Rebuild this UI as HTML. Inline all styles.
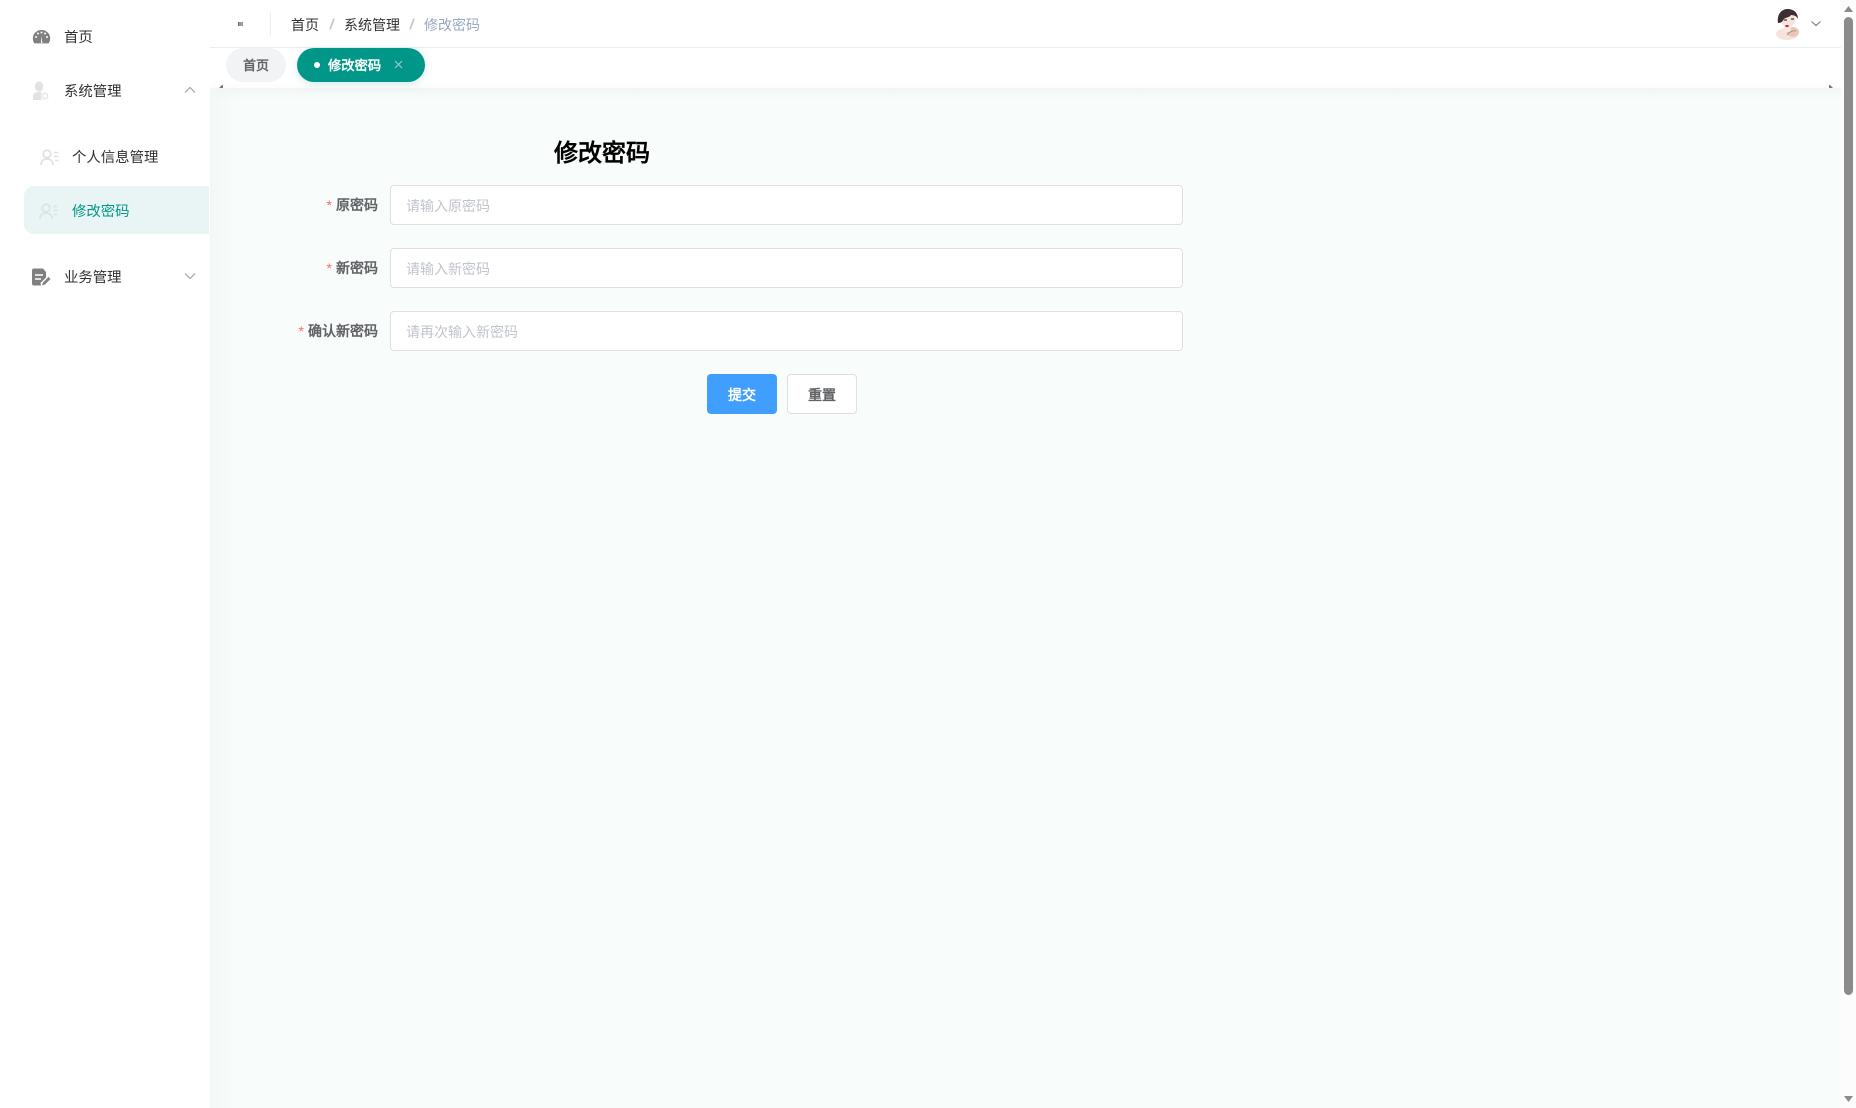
<!DOCTYPE html>
<html lang="zh"><head><meta charset="utf-8"><title>修改密码</title>
<style>
html,body{margin:0;padding:0;width:1856px;height:1108px;overflow:hidden;background:#f8fcfb;font-family:"Liberation Sans","WenQuanYi Zen Hei",sans-serif;font-size:14px;color:#303133}
.a{position:absolute;white-space:nowrap;line-height:20px}
#bg{position:absolute;left:210px;top:88px;width:1631px;height:1020px;background:linear-gradient(90deg,#f3f8f7 0,#f8fcfb 26px)}
#bg2{position:absolute;left:210px;top:88px;width:1631px;height:12px;background:linear-gradient(180deg,#f1f6f5,rgba(248,252,251,0))}
#side{position:absolute;left:0;top:0;width:210px;height:1108px;background:#fff}
#head{position:absolute;left:210px;top:0;width:1631px;height:47px;background:#fff;border-bottom:1px solid #ebedef}
#tabs{position:absolute;left:210px;top:48px;width:1631px;height:40px;background:linear-gradient(180deg,#fff 0,#fff 85%,#fbfcfc 100%)}
.pill{position:absolute;top:48px;height:34px;border-radius:17px}
.lab{position:absolute;right:1478px;font-weight:700;color:#606266;line-height:20px;white-space:nowrap}
.lab i{color:#f56c6c;font-style:normal;margin-right:4px;font-weight:400}
.inp{position:absolute;left:390px;width:791px;height:38px;background:#fff;border:1px solid #dcdfe6;border-radius:4px}
.inp span{position:absolute;left:15px;top:10px;color:#c0c4cc;line-height:20px;white-space:nowrap}
.btn{position:absolute;top:374px;width:70px;height:40px;border-radius:4px;text-align:center;line-height:43px;font-weight:700;box-sizing:border-box}
.m{font-size:14.4px}
</style></head><body>
<div id="bg"></div><div id="bg2"></div>
<div id="side"></div>
<div class="a" style="left:24px;top:186px;width:185px;height:48px;background:#e9f5f5;border-radius:10px 0 0 10px"></div>

<svg class="a" style="left:32px;top:29px" width="19" height="16" viewBox="0 0 19 16"><path d="M9.500 1C4.500 1 .8 4.800.8 9.400c0 2 .6 3.600 1.600 5h14.200c1-1.400 1.600-3 1.600-5C18.200 4.800 14.500 1 9.500 1z" fill="#808080"/><path d="M9 14l.4-7 1 7z" fill="#fff"/><circle cx="4" cy="8" r="1" fill="#fff"/><circle cx="6" cy="4.500" r="1" fill="#fff"/><circle cx="9.500" cy="3.500" r="1" fill="#fff"/><circle cx="13" cy="4.500" r="1" fill="#fff"/><circle cx="15" cy="8" r="1" fill="#fff"/></svg>
<div class="a m" style="left:64px;top:28px">首页</div>

<svg class="a" style="left:32px;top:81px" width="18" height="20" viewBox="0 0 18 20"><ellipse cx="7" cy="5.500" rx="4.200" ry="5.200" fill="#e2e2e2"/><path d="M1 19v-4c0-3 3-4 6-4 2 0 3 .5 3 .5-1.500 2-1.500 5 0 7.500z" fill="#e2e2e2"/><circle cx="13" cy="15" r="2.800" fill="none" stroke="#e8e8e8" stroke-width="1.500"/></svg>
<div class="a m" style="left:64px;top:82px">系统管理</div>
<svg class="a" style="left:183px;top:85px" width="14" height="10" viewBox="0 0 14 10"><path d="M2 7.500l5-5 5 5" fill="none" stroke="#9a9a9a" stroke-width="1"/></svg>

<svg class="a" style="left:40px;top:149px" width="19" height="17" viewBox="0 0 19 17"><circle cx="7" cy="5" r="3.800" fill="none" stroke="#e2e2e2" stroke-width="1.800"/><path d="M1 16c0-4 2.500-6 6-6s6 2 6 6" fill="none" stroke="#e2e2e2" stroke-width="1.800"/><path d="M14 3.500h4.500M14 7.500h4.500M15 11.500h3.500" stroke="#e2e2e2" stroke-width="1.500"/></svg>
<div class="a m" style="left:72px;top:148px;color:#303133">个人信息管理</div>

<svg class="a" style="left:39px;top:203px" width="19" height="17" viewBox="0 0 19 17"><circle cx="7" cy="5" r="3.800" fill="none" stroke="#dfe3e3" stroke-width="1.800"/><path d="M1 16c0-4 2.500-6 6-6s6 2 6 6" fill="none" stroke="#dfe3e3" stroke-width="1.800"/><path d="M14 3.500h4.500M14 7.500h4.500M15 11.500h3.500" stroke="#dfe3e3" stroke-width="1.500"/></svg>
<div class="a m" style="left:72px;top:202px;color:#009688">修改密码</div>

<svg class="a" style="left:32px;top:268px" width="19" height="18" viewBox="0 0 19 18"><path d="M0 2.500Q0 .5 2 .5h9l3 3.500v5.500L8.500 15 9 17.500H2q-2 0-2-2z" fill="#808080"/><path d="M3 7h8M3 11h6" stroke="#fff" stroke-width="1.600"/><path d="M10 17.500l1-3 5.500-5.500 2 2-5.500 5.500z" fill="#808080"/></svg>
<div class="a m" style="left:64px;top:268px">业务管理</div>
<svg class="a" style="left:183px;top:271px" width="14" height="10" viewBox="0 0 14 10"><path d="M2 2.500l5 5 5-5" fill="none" stroke="#9a9a9a" stroke-width="1"/></svg>

<div id="head"></div>
<div class="a" style="left:238px;top:22px;width:4px;height:4px;background:#9a9a9a;border-left:1px solid #666"></div>
<div class="a" style="left:270px;top:12px;width:1px;height:24px;background:#ebedef"></div>
<div class="a" style="left:291px;top:15px">首页</div>
<svg class="a" style="left:328px;top:17px" width="8" height="14" viewBox="0 0 8 14"><path d="M6 1.500L2 12.500" stroke="#c0c4cc" stroke-width="1.600"/></svg>
<div class="a" style="left:344px;top:15px">系统管理</div>
<svg class="a" style="left:408px;top:17px" width="8" height="14" viewBox="0 0 8 14"><path d="M6 1.500L2 12.500" stroke="#c0c4cc" stroke-width="1.600"/></svg>
<div class="a" style="left:424px;top:15px;color:#97a8be">修改密码</div>

<svg class="a" style="left:1774px;top:8px" width="27" height="32" viewBox="0 0 27 32">
<ellipse cx="13" cy="26" rx="11" ry="6" fill="#f7e3de"/>
<ellipse cx="19" cy="24" rx="6" ry="5" fill="#ecc4b8"/>
<path d="M10 16h7v8h-7z" fill="#f8e8e2"/>
<ellipse cx="14" cy="11" rx="7.500" ry="8" fill="#f7e2dc"/>
<path d="M4 15C2.500 6 8 1 13.500 1S24 4 24 11c-1-2-3-4-7-4-2 3-5 2-7 4-1 1.500-2 4-6 4z" fill="#3d2e32"/>
<path d="M11.500 18h3" stroke="#d81e2c" stroke-width="2"/>
<path d="M10 12h3M17 11h3" stroke="#6a5555" stroke-width="1.400"/>
<path d="M13 27c2-3 6-5 9-4" stroke="#a8938e" stroke-width="1" fill="none"/>
</svg>
<svg class="a" style="left:1809px;top:20px" width="14" height="8" viewBox="0 0 14 8"><path d="M2.500 1.500l4.500 4 4.500-4" fill="none" stroke="#777" stroke-width="1.100"/></svg>

<div id="tabs"></div>
<div class="pill" style="left:226px;width:60px;background:#f1f3f5"></div>
<div class="a" style="left:243px;top:56px;font-size:13px;font-weight:700;color:#606266">首页</div>
<div class="pill" style="left:297px;width:128px;background:#009688;box-shadow:0 2px 8px rgba(0,150,136,.18)"></div>
<div class="a" style="left:314px;top:62px;width:6px;height:6px;border-radius:50%;background:#fff"></div>
<div class="a" style="left:328px;top:56px;font-size:13.3px;font-weight:700;color:#fff">修改密码</div>
<svg class="a" style="left:394px;top:60px" width="9" height="9" viewBox="0 0 9 9"><path d="M1 1l7 7M8 1l-7 7" stroke="#9fd3ce" stroke-width="1"/></svg>
<svg class="a" style="left:218px;top:85px" width="6" height="3" viewBox="0 0 6 3"><path d="M1 3L4 0h1v3z" fill="#777"/></svg>
<svg class="a" style="left:1828px;top:85px" width="6" height="3" viewBox="0 0 6 3"><path d="M1 0h1l3 3H1z" fill="#777"/></svg>

<div class="a" style="left:554px;top:138px;font-size:24px;line-height:32px;font-weight:700;color:#000">修改密码</div>

<div class="lab" style="top:195px"><i>*</i>原密码</div>
<div class="inp" style="top:185px"><span>请输入原密码</span></div>
<div class="lab" style="top:258px"><i>*</i>新密码</div>
<div class="inp" style="top:248px"><span>请输入新密码</span></div>
<div class="lab" style="top:321px"><i>*</i>确认新密码</div>
<div class="inp" style="top:311px"><span>请再次输入新密码</span></div>

<div class="btn" style="left:707px;background:#409eff;color:#fff">提交</div>
<div class="btn" style="left:787px;background:#fff;border:1px solid #dcdfe6;color:#606266;line-height:41px">重置</div>

<div class="a" style="left:1841px;top:0;width:15px;height:1108px;background:#fcfcfc"></div>
<div class="a" style="left:1844px;top:17px;width:9px;height:978px;border-radius:5px;background:#8b8b8b"></div>
<svg class="a" style="left:1841px;top:4px" width="15" height="9" viewBox="0 0 15 9"><path d="M3 8L7.500 2 12 8z" fill="#8b8b8b"/></svg>
<svg class="a" style="left:1841px;top:1095px" width="15" height="9" viewBox="0 0 15 9"><path d="M3 1h9L7.500 7z" fill="#8b8b8b"/></svg>
</body></html>
